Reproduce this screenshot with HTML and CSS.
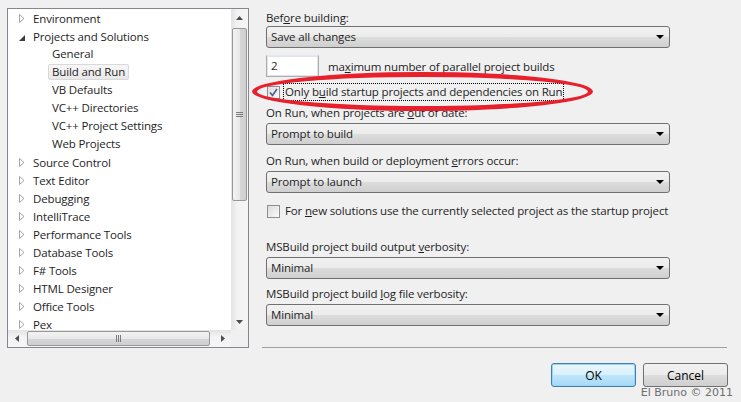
FILE: index.html
```html
<!DOCTYPE html>
<html lang="en">
<head>
    <meta charset="UTF-8">
    <title>Options - Build and Run</title>
    <link rel="stylesheet" href="styles.css">
</head>
<body>

    <div class="dialog">
        <div class="main">
            <!-- options tree -->
            <div class="tree">
                <ul class="tree-list">
                    <li class="node"><span class="arrow"><svg width="6" height="9"><path d="M0.5 0.5 L5 4.5 L0.5 8.5 Z" fill="#fff" stroke="#a6a6a6"/></svg></span>Environment</li>
                    <li class="node"><span class="arrow open"><svg width="6" height="6"><path d="M6 0 L6 6 L0 6 Z" fill="#3c3c3c"/></svg></span>Projects and Solutions</li>
                    <li class="node child"><span class="label">General</span></li>
                    <li class="node child"><span class="label selected">Build and Run</span></li>
                    <li class="node child"><span class="label">VB Defaults</span></li>
                    <li class="node child"><span class="label">VC++ Directories</span></li>
                    <li class="node child"><span class="label">VC++ Project Settings</span></li>
                    <li class="node child"><span class="label">Web Projects</span></li>
                    <li class="node"><span class="arrow"><svg width="6" height="9"><path d="M0.5 0.5 L5 4.5 L0.5 8.5 Z" fill="#fff" stroke="#a6a6a6"/></svg></span>Source Control</li>
                    <li class="node"><span class="arrow"><svg width="6" height="9"><path d="M0.5 0.5 L5 4.5 L0.5 8.5 Z" fill="#fff" stroke="#a6a6a6"/></svg></span>Text Editor</li>
                    <li class="node"><span class="arrow"><svg width="6" height="9"><path d="M0.5 0.5 L5 4.5 L0.5 8.5 Z" fill="#fff" stroke="#a6a6a6"/></svg></span>Debugging</li>
                    <li class="node"><span class="arrow"><svg width="6" height="9"><path d="M0.5 0.5 L5 4.5 L0.5 8.5 Z" fill="#fff" stroke="#a6a6a6"/></svg></span>IntelliTrace</li>
                    <li class="node"><span class="arrow"><svg width="6" height="9"><path d="M0.5 0.5 L5 4.5 L0.5 8.5 Z" fill="#fff" stroke="#a6a6a6"/></svg></span>Performance Tools</li>
                    <li class="node"><span class="arrow"><svg width="6" height="9"><path d="M0.5 0.5 L5 4.5 L0.5 8.5 Z" fill="#fff" stroke="#a6a6a6"/></svg></span>Database Tools</li>
                    <li class="node"><span class="arrow"><svg width="6" height="9"><path d="M0.5 0.5 L5 4.5 L0.5 8.5 Z" fill="#fff" stroke="#a6a6a6"/></svg></span>F# Tools</li>
                    <li class="node"><span class="arrow"><svg width="6" height="9"><path d="M0.5 0.5 L5 4.5 L0.5 8.5 Z" fill="#fff" stroke="#a6a6a6"/></svg></span>HTML Designer</li>
                    <li class="node"><span class="arrow"><svg width="6" height="9"><path d="M0.5 0.5 L5 4.5 L0.5 8.5 Z" fill="#fff" stroke="#a6a6a6"/></svg></span>Office Tools</li>
                    <li class="node"><span class="arrow"><svg width="6" height="9"><path d="M0.5 0.5 L5 4.5 L0.5 8.5 Z" fill="#fff" stroke="#a6a6a6"/></svg></span>Pex</li>
                </ul>

                <div class="vscroll">
                    <div class="sb-btn"><svg width="7" height="4"><path d="M3.5 0 L7 4 L0 4 Z" fill="#4d4d4d"/></svg></div>
                    <div class="thumb-v"><svg width="7" height="6"><path d="M0 0.5 H7 M0 2.5 H7 M0 4.5 H7" stroke="#7a7a7a"/></svg></div>
                    <div class="track"></div>
                    <div class="sb-btn"><svg width="7" height="4"><path d="M0 0 L7 0 L3.5 4 Z" fill="#4d4d4d"/></svg></div>
                </div>

                <div class="hscroll">
                    <div class="sb-btn"><svg width="4" height="7"><path d="M4 0 L4 7 L0 3.5 Z" fill="#4d4d4d"/></svg></div>
                    <div class="thumb-h"><svg width="6" height="7"><path d="M0.5 0 V7 M2.5 0 V7 M4.5 0 V7" stroke="#7a7a7a"/></svg></div>
                    <div class="track"></div>
                    <div class="sb-btn"><svg width="4" height="7"><path d="M0 0 L4 3.5 L0 7 Z" fill="#4d4d4d"/></svg></div>
                </div>

                <div class="corner"></div>
            </div>

            <!-- build and run page -->
            <div class="settings">
                <div class="field-label">Bef<u>o</u>re building:</div>
                <div class="combo">Save all changes<span class="drop"></span></div>

                <div class="count-row">
                    <div class="textbox">2</div>
                    <span>ma<u>x</u>imum number of parallel project builds</span>
                </div>

                <div class="check-row first-check">
                    <span class="checkbox checked"><svg width="9" height="9"><path d="M1 4.5 L3.5 7.5 L8 1" fill="none" stroke="#4a5a8c" stroke-width="1.6"/></svg></span>
                    <span class="check-label focused">Only b<u>u</u>ild startup projects and dependencies on Run</span>
                </div>

                <div class="field-label gap-small">On Run, when projects are <u>o</u>ut of date:</div>
                <div class="combo">Prompt to build<span class="drop"></span></div>

                <div class="field-label gap-mid">On Run, when build or deployment <u>e</u>rrors occur:</div>
                <div class="combo">Prompt to launch<span class="drop"></span></div>

                <div class="check-row second-check">
                    <span class="checkbox"></span>
                    <span class="check-label">For <u>n</u>ew solutions use the currently selected project as the startup project</span>
                </div>

                <div class="field-label gap-big">MSBuild project build output <u>v</u>erbosity:</div>
                <div class="combo">Minimal<span class="drop"></span></div>

                <div class="field-label gap-last">MSBuild project build <u>l</u>og file verbosity:</div>
                <div class="combo">Minimal<span class="drop"></span></div>

                <div class="ring"></div>
            </div>
        </div>

        <div class="buttons">
            <button class="btn default">OK</button>
            <button class="btn">Cancel</button>
        </div>

        <span class="credit">El Bruno &copy; 2011</span>
    </div>

</body>
</html>
```

FILE: styles.css
```css
body {
    margin: 0;
    background-color: #f0f0f0;
    font-family: "Segoe UI", "Open Sans", sans-serif;
    font-size: 11.5px;
    letter-spacing: -0.15px;
    color: #1e1e1e;
}
.dialog {
    position: relative;
    width: 741px;
    height: 402px;
    padding: 8px 0 0 7px;
    box-sizing: border-box;
}
.main {
    display: flex;
}
.tree {
    width: 242px;
    height: 340px;
    box-sizing: border-box;
    border: 1px solid #828790;
    background-color: #fff;
    display: grid;
    grid-template-columns: 1fr 17px;
    grid-template-rows: 1fr 17px;
    overflow: hidden;
}
.tree-list {
    list-style: none;
    margin: 0;
    padding: 0;
    overflow: hidden;
}
.node {
    height: 18px;
    display: flex;
    align-items: center;
    padding-left: 11px;
    white-space: nowrap;
}
.node.child {
    padding-left: 40px;
}
.arrow {
    width: 14px;
    display: flex;
    align-items: center;
    padding-top: 1px;
}
.arrow.open {
    padding-top: 4px;
}
.label {
    padding: 0 3px;
    border: 1px solid transparent;
    line-height: 14px;
    border-radius: 2px;
}
.label.selected {
    border-color: #d9d9d9;
    background: linear-gradient(#f7f7f7, #e8e8e8);
}
.vscroll {
    display: flex;
    flex-direction: column;
    background: linear-gradient(to right, #e3e3e3, #f3f3f3 40%, #f5f5f5);
}
.hscroll {
    display: flex;
    background: linear-gradient(#e3e3e3, #f3f3f3 40%, #f5f5f5);
}
.sb-btn {
    width: 17px;
    height: 17px;
    flex-shrink: 0;
    display: flex;
    align-items: center;
    justify-content: center;
}
.track {
    flex: 1;
}
.thumb-v {
    margin: 2px 1px 0 1px;
    height: 171px;
    border: 1px solid #979797;
    border-radius: 2px;
    background: linear-gradient(to right, #f3f3f3, #e8e8e8 50%, #d6d6d6 51%, #cfcfcf);
    display: flex;
    align-items: center;
    justify-content: center;
}
.thumb-h {
    margin: 1px 0 1px 2px;
    width: 181px;
    border: 1px solid #979797;
    border-radius: 2px;
    background: linear-gradient(#f3f3f3, #e8e8e8 50%, #d6d6d6 51%, #cfcfcf);
    display: flex;
    align-items: center;
    justify-content: center;
}
.corner {
    background-color: #f0f0f0;
}
.settings {
    position: relative;
    margin-left: 13px;
    width: 465px;
    height: 340px;
    padding: 2px 0 0 4px;
    box-sizing: border-box;
    border-bottom: 1px solid #a0a0a0;
}
.field-label {
    line-height: 16px;
    white-space: nowrap;
}
.gap-small {
    margin-top: 4px;
}
.gap-mid {
    margin-top: 8px;
}
.gap-big {
    margin-top: 19px;
}
.gap-last {
    margin-top: 7px;
}
.combo {
    position: relative;
    width: 404px;
    height: 22px;
    box-sizing: border-box;
    border: 1px solid #707070;
    border-radius: 3px;
    background: linear-gradient(#f2f2f2, #ebebeb 50%, #dddddd 51%, #cfcfcf);
    line-height: 20px;
    padding-left: 4px;
}
.gap-small + .combo,
.gap-mid + .combo,
.gap-big + .combo,
.gap-last + .combo {
    margin-top: 2px;
}
.drop {
    position: absolute;
    right: 5px;
    top: 8px;
    width: 0;
    height: 0;
    border-left: 4px solid transparent;
    border-right: 4px solid transparent;
    border-top: 4px solid #000;
}
.count-row {
    display: flex;
    align-items: center;
    margin-top: 7px;
    height: 22px;
    white-space: nowrap;
}
.textbox {
    width: 53px;
    height: 22px;
    box-sizing: border-box;
    border: 1px solid #abadb3;
    border-top-color: #e3e9ef;
    background-color: #fff;
    line-height: 20px;
    padding-left: 4px;
    margin-right: 9px;
    outline: 1px solid #e2e3ea;
    outline-offset: -2px;
}
.check-row {
    display: flex;
    align-items: center;
    height: 18px;
    white-space: nowrap;
}
.first-check {
    margin-top: 6px;
}
.second-check {
    margin-top: 9px;
}
.checkbox {
    width: 13px;
    height: 13px;
    box-sizing: border-box;
    border: 1px solid #8e8f8f;
    background: linear-gradient(135deg, #dcdcdc, #fbfbfb);
    margin: 0 3px 0 1px;
    display: flex;
    align-items: center;
    justify-content: center;
}
.check-label {
    border: 1px dotted transparent;
    padding: 0 1px;
    line-height: 16px;
}
.check-label.focused {
    border-color: #000;
}
.ring {
    position: absolute;
    left: -10px;
    top: 64px;
    width: 341px;
    height: 39px;
    box-sizing: border-box;
    border: 5px solid #e8202b;
    border-radius: 50%;
}
.buttons {
    display: flex;
    justify-content: flex-end;
    gap: 7px;
    margin-top: 15px;
    padding-right: 13px;
}
.btn {
    width: 85px;
    height: 24px;
    font-family: inherit;
    font-size: 12px;
    color: #000;
    border: 1px solid #707070;
    border-radius: 3px;
    background: linear-gradient(#f2f2f2, #ebebeb 50%, #dddddd 51%, #cfcfcf);
    padding: 0;
}
.btn.default {
    border-color: #3c7fb1;
    background: linear-gradient(#eaf6fd, #d9f0fc 50%, #bee6fd 51%, #a7d9f5);
    box-shadow: inset 0 0 0 1px #9cd4f4;
}
.credit {
    position: absolute;
    right: 8px;
    bottom: 3px;
    font-family: "DejaVu Sans", sans-serif;
    font-size: 11px;
    letter-spacing: 0;
    color: #6e6e6e;
}
```
